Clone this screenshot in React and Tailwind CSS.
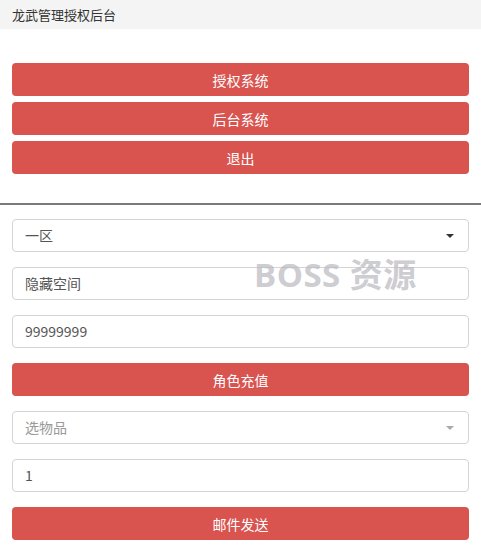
import React from 'react';

const font = { fontFamily: '"Microsoft YaHei", "Noto Sans CJK SC", "Liberation Sans", sans-serif' };

const RedButton = ({ children }) => (
  <button className="w-full h-[33px] rounded-[4px] bg-[#d9534f] text-white text-[14px] leading-none">
    {children}
  </button>
);

const Field = ({ children, muted = false }) => (
  <div
    className={`w-full h-[33px] rounded-[4px] border border-[#d4d4d4] bg-white px-[12px] flex items-center text-[14px] ${
      muted ? 'text-[#999]' : 'text-[#555]'
    }`}
  >
    {children}
  </div>
);

const SelectField = ({ children, muted = false }) => (
  <div
    className={`w-full h-[33px] rounded-[4px] border border-[#d4d4d4] bg-white pl-[12px] pr-[14px] flex items-center justify-between text-[14px] ${
      muted ? 'text-[#999]' : 'text-[#555]'
    }`}
  >
    <span>{children}</span>
    <span
      className={`w-0 h-0 border-l-[4px] border-r-[4px] border-t-[4px] border-l-transparent border-r-transparent ${
        muted ? 'border-t-[#aaa]' : 'border-t-[#333]'
      }`}
    />
  </div>
);

export default function App() {
  return (
    <div className="relative w-[481px] h-[548px] bg-white overflow-hidden" style={font}>
      <div className="h-[29px] bg-[#f4f4f4] px-[12px] flex items-center text-[13px] text-[#333]">
        龙武管理授权后台
      </div>

      <div className="px-[12px] pt-[34px] flex flex-col gap-[6px]">
        <RedButton>授权系统</RedButton>
        <RedButton>后台系统</RedButton>
        <RedButton>退出</RedButton>
      </div>

      <div className="mt-[29px] h-[2px] bg-[#7a7a7a]" />

      <div className="px-[12px] pt-[14px] flex flex-col gap-[15px]">
        <SelectField>一区</SelectField>
        <Field>隐藏空间</Field>
        <Field>99999999</Field>
        <RedButton>角色充值</RedButton>
        <SelectField muted>选物品</SelectField>
        <Field>1</Field>
        <RedButton>邮件发送</RedButton>
      </div>

      <div
        className="absolute left-[254px] top-[250px] text-[33px] font-bold text-[#b8b8c0] opacity-70 pointer-events-none tracking-[0.5px]"
        style={{ fontFamily: '"Open Sans", "Noto Sans CJK SC", sans-serif' }}
      >
        BOSS 资源
      </div>
    </div>
  );
}
